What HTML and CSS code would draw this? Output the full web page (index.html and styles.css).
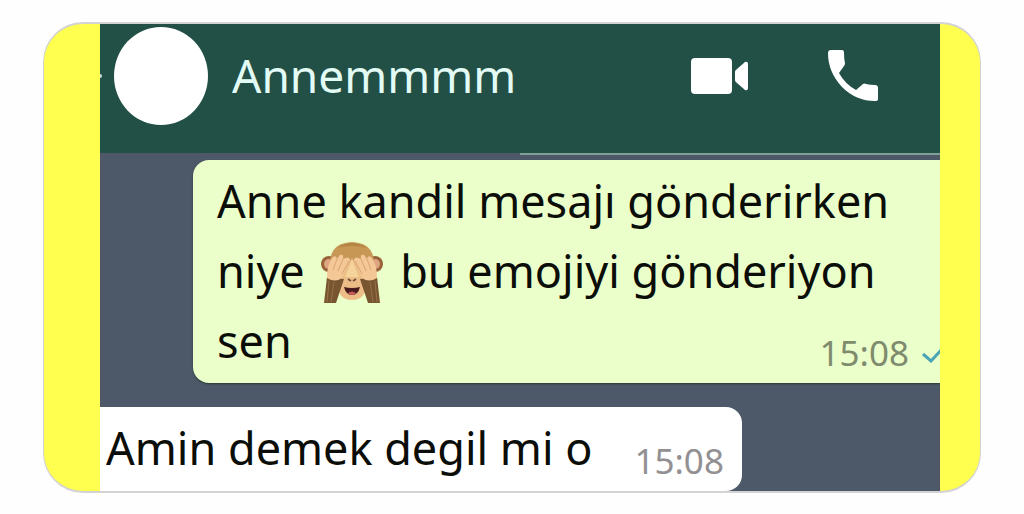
FILE: index.html
```
<!DOCTYPE html>
<html lang="tr">
<head>
	<meta charset="UTF-8">
	<meta name="viewport" content="width=device-width, initial-scale=1">
	<title>Annemmmm</title>
	<link rel="stylesheet" href="styles.css">
</head>
<body>
	<main class="card">
		<div class="chat">
			<header class="topbar">
				<span class="backtip"></span>
				<div class="avatar"></div>
				<h1 class="name">Annemmmm</h1>
				<button class="call" type="button" aria-label="Video">
					<svg width="58" height="38" viewBox="0 0 58 38">
						<rect x="0" y="1" width="41" height="36" rx="4"/>
						<path d="M44 15Q44 13 46 12L54 5Q57 4 57 7V31Q57 34 54 33L46 26Q44 25 44 23Z"/>
					</svg>
				</button>
				<button class="call" type="button" aria-label="Ara">
					<svg width="50" height="52" viewBox="0 0 50 52">
						<path d="M3 0H14Q16 0 16 3Q16 9 17 13Q17 15 16 16L11 23Q17 34 28 40L35 34Q36 33 38 34Q42 35 47 35Q50 35 50 38V49Q50 51 47 51Q28 51 14 37Q0 22 0 3Q0 0 3 0Z"/>
					</svg>
				</button>
			</header>
			<div class="divider"></div>
			<section class="messages">
				<div class="bubble sent">
					<p>Anne kandil mesajı gönderirken<br>niye
						<svg class="monkey" role="img" aria-label="Maymun" width="64" height="64" viewBox="0 0 64 64">
							<circle cx="9" cy="23" r="8" fill="#986338"/>
							<circle cx="55" cy="23" r="8" fill="#986338"/>
							<circle cx="9" cy="23" r="5" fill="#dfa583"/>
							<circle cx="55" cy="23" r="5" fill="#dfa583"/>
							<path d="M10 27Q8 2 32 1Q56 2 54 27L50 45H14Z" fill="#c79855"/>
							<path d="M17 7Q32 -3 47 7Q32 3 17 7Z" fill="#b58546"/>
							<path d="M32 17L18 43Q18 59 32 59Q46 59 46 43Z" fill="#edbd88"/>
							<path d="M32 18L25 36H39Z" fill="#f5d49b"/>
							<path d="M7 36L24 38L16 62H4Z" fill="#775530"/>
							<path d="M57 36L40 38L48 62H60Z" fill="#775530"/>
							<path d="M9 40L7 61M14 41L11 61M55 40L57 61M50 41L53 61" stroke="#997044" stroke-width="1"/>
							<path d="M7 37Q7 24 12 17Q16 13 17 18L20 14Q24 13 23 18Q30 14 30 20L22 37Q15 42 7 37Z" fill="#f4c797"/>
							<path d="M57 37Q57 24 52 17Q48 13 47 18L44 14Q40 13 41 18Q34 14 34 20L42 37Q49 42 57 37Z" fill="#f4c797"/>
							<path d="M17 18L13 29M23 18L18 30M29 20L22 33M47 18L51 29M41 18L46 30M35 20L42 33" stroke="#d9a473" stroke-width="1"/>
							<path d="M28 38L31 40M36 38L33 40" stroke="#735239" stroke-width="2"/>
							<path d="M24 46Q32 48 40 46Q38 54 32 54Q26 54 24 46Z" fill="#491b1d"/>
							<path d="M28 52Q32 49 36 52Q34 54 32 54Q30 54 28 52Z" fill="#c75a5a"/>
						</svg>
						bu emojiyi gönderiyon<br>
						<span class="meta"><time>15:08</time><svg class="tick" width="18" height="20" viewBox="0 0 18 20"><path d="M1 11L9 18L21 5"/></svg></span>sen</p>
				</div>
				<div class="bubble received">
					<p>Amin demek degil mi o</p>
					<time>15:08</time>
				</div>
			</section>
		</div>
	</main>
</body>
</html>
```
FILE: styles.css
```
*{
	box-sizing: border-box;
}
body{
	margin: 0;
	padding: 22px 43px;
	background: #fefefe;
	font-family: "Noto Sans", sans-serif;
}
.card{
	padding: 0 40px 0 56px;
	border: 1px solid #d3d3d3;
	border-width: 2px 1px;
	border-radius: 40px;
	background: #ffff50;
	overflow: hidden;
}
.chat{
	background: #4d5969;
	overflow: hidden;
}
.topbar{
	display: flex;
	align-items: center;
	padding: 3px 62px 28px 0;
	background: #225047;
}
.backtip{
	width: 2px;
	height: 4px;
	margin-right: 12px;
	border-radius: 0 2px 2px 0;
	background: #c9dfdb;
}
.avatar{
	width: 94px;
	height: 98px;
	border-radius: 50%;
	background: #fff;
}
.name{
	flex: 1;
	margin: 0 0 0 24px;
	padding-bottom: 2px;
	font-size: 46px;
	line-height: 60px;
	font-weight: 400;
	color: #e2fbf5;
}
.call{
	display: flex;
	margin: 0;
	padding: 0;
	border: 0;
	background: none;
	fill: #fff;
}
.call + .call{
	margin-left: 79px;
}
.divider{
	width: 50%;
	height: 2px;
	margin-left: auto;
	background: #7fa096;
}
.messages{
	display: flex;
	flex-direction: column;
	gap: 24px;
	padding-top: 5px;
}
.bubble{
	font-size: 45px;
	color: #0b0d08;
}
.bubble p{
	margin: 0;
}
.sent{
	margin-left: 93px;
	padding: 6px 0 7px 24px;
	border-radius: 16px 0 0 16px;
	background: #ebffcb;
	box-shadow: 0 1px 2px #263b30;
	line-height: 70px;
}
.monkey{
	margin: 0 4px;
	vertical-align: -17px;
}
.meta{
	float: right;
	display: flex;
	align-items: center;
	gap: 13px;
	padding-top: 24px;
	line-height: 46px;
}
time{
	font-size: 35px;
	color: #7f8b6d;
}
.tick{
	fill: none;
	stroke: #4ba5b5;
	stroke-width: 3;
}
.received{
	display: flex;
	align-items: center;
	align-self: flex-start;
	gap: 42px;
	padding: 0 18px 0 6px;
	border-radius: 0 16px 16px 0;
	background: #fff;
}
.received p{
	padding-bottom: 2px;
	line-height: 82px;
}
.received time{
	padding-top: 24px;
	line-height: 60px;
	color: #929092;
}
```
